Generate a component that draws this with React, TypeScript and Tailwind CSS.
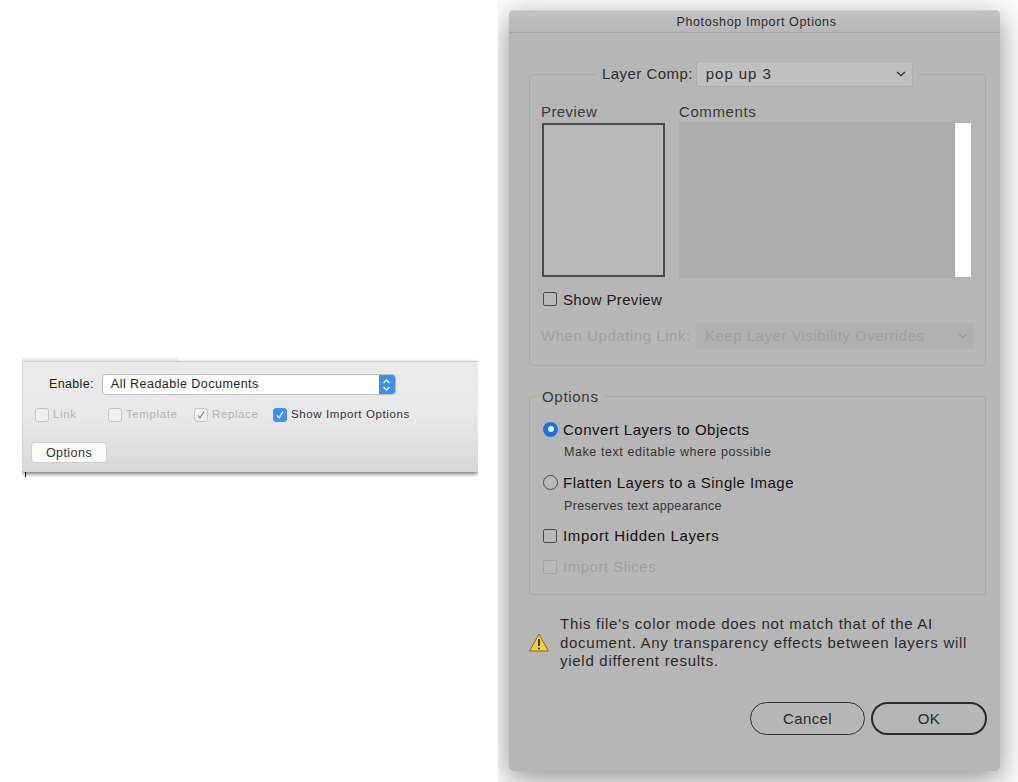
import React from "react";

const Chevron = ({ c = "#3a3a3a" }: { c?: string }) => (
  <svg width="10" height="6" viewBox="0 0 10 6" fill="none">
    <path d="M1 1l4 3.6L9 1" stroke={c} strokeWidth="1.4" />
  </svg>
);

const Box = ({ dim = false }: { dim?: boolean }) => (
  <span className={`block w-[14px] h-[14px] mb-[2px] rounded-[2px] border ${dim ? "border-[#a4a4a4]" : "border-[#4c4c4c]"} bg-[#bcbcbc]/50 shrink-0`} />
);

const Mini = ({ label, checked, on, className }: { label: string; checked?: boolean; on?: boolean; className: string }) => (
  <div className={`flex items-center gap-[4px] ${className}`}>
    <span className={`flex items-center justify-center w-[14px] h-[14px] rounded-[3px] border ${on ? "bg-[#3d8ff0] border-[#3d8ff0]" : "bg-[#efefef] border-[#c6c6c6]"}`}>
      {checked && (
        <svg width="10" height="10" viewBox="0 0 10 10" fill="none">
          <path d="M2 5.4L4 8l4-6.4" stroke={on ? "#fff" : "#8a8a8a"} strokeWidth="1.2" />
        </svg>
      )}
    </span>
    <span className={`text-[11.5px] tracking-[0.6px] ${on ? "text-[#333]" : "text-[#b4b4b4]"}`}>{label}</span>
  </div>
);

export default function App() {
  return (
    <div className="flex w-[1018px] h-[782px] overflow-hidden bg-white font-['Liberation_Sans',sans-serif]">
      <div className="w-[498px] shrink-0 pl-[22px] pt-[358px]">
        <div className="relative w-[456px] h-[119px] overflow-hidden">
          <div className="w-[156px] h-[3px] bg-[#f6f0ed]" />
          <div className="absolute left-[3px] bottom-0 w-[1px] h-[6px] bg-black" />
          <div className="relative h-[111px] bg-gradient-to-b from-[#eaeaea] via-[#e8e8e8] to-[#d8d8d8] border-t border-[#cfcfcf] rounded-bl-[4px] shadow-[0_2px_4px_rgba(0,0,0,0.55)] border-l border-l-[#d4d4d4]">
            <div className="flex items-center pl-[26px] pt-[12px]">
              <span className="text-[12.5px] tracking-[0.35px] text-[#222]">Enable:</span>
              <div className="ml-[8px] flex w-[294px] h-[21px] rounded-[4px] bg-white border border-[#bdbdbd] overflow-hidden">
                <span className="flex-1 pl-[8px] text-[12.5px] leading-[19px] tracking-[0.47px] text-[#222]">All Readable Documents</span>
                <span className="w-[16px] bg-[#3d8ff0] flex items-center justify-center">
                  <svg width="9" height="14" viewBox="0 0 9 14" fill="none">
                    <path d="M1.5 5L4.5 2l3 3M1.5 9l3 3 3-3" stroke="#fff" strokeWidth="1.3" />
                  </svg>
                </span>
              </div>
            </div>
            <div className="flex items-center mt-[11px] pl-[12px]">
              <Mini label="Link" className="w-[73px]" />
              <Mini label="Template" className="w-[86px]" />
              <Mini label="Replace" checked className="w-[79px]" />
              <Mini label="Show Import Options" checked on className="" />
            </div>
            <div className="mt-[19px] ml-[8px] w-[76px] h-[21px] rounded-[4px] bg-[#fafafa] border border-[#cfcfcf] text-center text-[12.5px] leading-[20px] tracking-[0.45px] text-[#333]">Options</div>
          </div>
        </div>
      </div>

      <div className="flex-1 h-[782px] overflow-hidden pl-[11px] pt-[10px] bg-[#fbfbfb]">
        <div className="w-[491px] h-[761px] rounded-[5px] bg-[#b6b6b6] shadow-[0_8px_28px_rgba(0,0,0,0.42)]">
          <div className="h-[23px] pl-[4px] rounded-t-[5px] bg-gradient-to-b from-[#c2c2c2] to-[#b7b7b7] border-b border-[#a2a2a2] border-t border-t-[#cdcdcd] text-center text-[12.5px] leading-[22px] tracking-[0.62px] text-[#2b2b2b]">
            Photoshop Import Options
          </div>

          <div className="pl-[20px] pr-[14px] pt-[28px]">
            <fieldset className="h-[305px] border border-[#a9a9a9] rounded-[3px] pl-[11px] pr-[8px]">
              <legend className="ml-[55px] pl-[6px] pr-[5px] flex items-center">
                <span className="text-[15px] tracking-[0.45px] text-[#2e2e2e]">Layer Comp:</span>
                <span className="ml-[3px] flex items-center justify-between w-[217px] h-[26px] rounded-[3px] bg-[#c0c0c0] border border-[#adadad] pl-[9px] pr-[6px] text-[15px] tracking-[0.95px] text-[#2e2e2e]">
                  pop up 3
                  <Chevron />
                </span>
              </legend>
              <div className="flex mt-[16px]">
                <div className="w-[138px]">
                  <div className="text-[15px] leading-[17px] tracking-[0.4px] text-[#3a3a3a]">Preview</div>
                  <div className="mt-[3px] ml-[1px] w-[123px] h-[154px] border-2 border-[#4b4b4b] bg-[#b9b9b9]" />
                </div>
                <div className="w-[292px]">
                  <div className="text-[15px] leading-[17px] tracking-[0.6px] text-[#3a3a3a]">Comments</div>
                  <div className="mt-[2px] h-[156px] bg-[#adadad] flex justify-end py-[1px]">
                    <div className="w-[16px] bg-white" />
                  </div>
                </div>
              </div>
              <div className="flex items-center mt-[13px] ml-[2px] gap-[6px]">
                <Box />
                <span className="text-[15px] leading-[17px] tracking-[0.35px] text-[#1c1c1c]">Show Preview</span>
              </div>
              <div className="flex items-center mt-[15px] whitespace-nowrap">
                <span className="shrink-0 w-[155px] text-[15px] tracking-[0.55px] text-[#a0a0a0]">When Updating Link:</span>
                <span className="shrink-0 flex items-center justify-between w-[278px] h-[26px] bg-[#b0b0b0] pl-[9px] pr-[6px] text-[15px] tracking-[0.5px] text-[#a0a0a0]">
                  Keep Layer Visibility Overrides
                  <Chevron c="#9c9c9c" />
                </span>
              </div>
            </fieldset>

            <fieldset className="mt-[22px] h-[207px] border border-[#a9a9a9] rounded-[3px] pl-[13px]">
              <legend className="-ml-[7px] px-[6px] text-[15px] leading-[17px] tracking-[0.7px] text-[#3a3a3a]">Options</legend>
              <div className="flex items-center mt-[17px] gap-[5px] h-[17px]">
                <span className="flex items-center justify-center w-[15px] h-[15px] mb-[3px] rounded-full bg-[#1c73e0]">
                  <span className="w-[6px] h-[6px] rounded-full bg-[#e8e8e8]" />
                </span>
                <span className="text-[15px] tracking-[0.52px] text-[#111]">Convert Layers to Objects</span>
              </div>
              <div className="ml-[21px] mt-[6px] text-[12.5px] leading-[14px] tracking-[0.58px] text-[#333]">Make text editable where possible</div>
              <div className="flex items-center mt-[16px] gap-[5px] h-[17px]">
                <span className="w-[15px] h-[15px] mb-[2px] rounded-full border border-[#4c4c4c] bg-[#bcbcbc]/50" />
                <span className="text-[15px] tracking-[0.47px] text-[#111]">Flatten Layers to a Single Image</span>
              </div>
              <div className="ml-[21px] mt-[7px] text-[12.5px] leading-[14px] tracking-[0.34px] text-[#333]">Preserves text appearance</div>
              <div className="flex items-center mt-[15px] gap-[6px] h-[17px]">
                <Box />
                <span className="text-[15px] tracking-[0.65px] text-[#111]">Import Hidden Layers</span>
              </div>
              <div className="flex items-center mt-[14px] gap-[6px] h-[17px]">
                <Box dim />
                <span className="text-[15px] tracking-[0.5px] text-[#a0a0a0]">Import Slices</span>
              </div>
            </fieldset>

            <div className="flex items-center mt-[20px]">
              <svg width="20" height="19" viewBox="0 0 20 19" className="shrink-0">
                <path d="M10 1L19.4 18H.6z" fill="#f2cf3c" stroke="#6f6530" strokeWidth="0.9" strokeLinejoin="round" />
                <path d="M10 6v7" stroke="#222" strokeWidth="1.7" />
                <circle cx="10" cy="15.4" r="1" fill="#222" />
              </svg>
              <p className="ml-[11px] text-[15px] leading-[18.5px] tracking-[0.72px] text-[#2a2a2a]">
                This file's color mode does not match that of the AI<br />
                document. Any transparency effects between layers will<br />
                yield different results.
              </p>
            </div>

            <div className="flex justify-end gap-[6px] mt-[31px] -mr-[1px]">
              <div className="w-[115px] h-[33px] rounded-full border border-[#333] text-center text-[15px] leading-[31px] tracking-[0.4px] text-[#2a2a2a]">Cancel</div>
              <div className="w-[116px] h-[33px] rounded-full border-2 border-[#2a2a2a] text-center text-[15px] leading-[29px] tracking-[0.4px] text-[#2a2a2a]">OK</div>
            </div>
          </div>
        </div>
      </div>
    </div>
  );
}
